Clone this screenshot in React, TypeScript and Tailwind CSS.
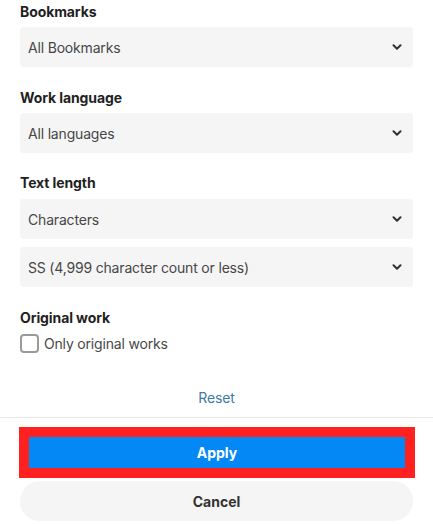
import { useState } from 'react';

const Chevron = () => (
  <svg width="10" height="6" viewBox="0 0 10 6" className="shrink-0" fill="none">
    <path d="M1.5 1.2l3.5 3.5 3.5-3.5" stroke="#333333" strokeWidth="2" strokeLinecap="round" strokeLinejoin="round" />
  </svg>
);

function SelectBox({ value }: { value: string }) {
  return (
    <div className="flex h-10 items-center justify-between rounded-[4px] bg-[#f5f5f5] pl-2 pr-[11px]">
      <span className="text-[14px] tracking-[-0.18px] text-[#474747]">{value}</span>
      <Chevron />
    </div>
  );
}

function Label({ children }: { children: string }) {
  return <div className="h-5 text-[14px] font-bold leading-5 tracking-[-0.1px] text-[#1f1f1f]">{children}</div>;
}

export default function App() {
  const [onlyOriginal, setOnlyOriginal] = useState(false);

  return (
    <div className="h-[524px] w-[433px] overflow-hidden bg-white font-['Inter',sans-serif]">
      <div className="flex flex-col px-5 pt-0.5">
        <Label>Bookmarks</Label>
        <div className="mt-[5px]">
          <SelectBox value="All Bookmarks" />
        </div>

        <div className="mt-[21px]">
          <Label>Work language</Label>
        </div>
        <div className="mt-[5px]">
          <SelectBox value="All languages" />
        </div>

        <div className="mt-5">
          <Label>Text length</Label>
        </div>
        <div className="mt-[6px] flex flex-col gap-2">
          <SelectBox value="Characters" />
          <SelectBox value="SS (4,999 character count or less)" />
        </div>

        <div className="mt-[21px]">
          <Label>Original work</Label>
        </div>
        <label className="mt-[5px] flex h-5 cursor-pointer items-center gap-[5px]">
          <span
            className={
              onlyOriginal
                ? 'h-[19px] w-[19px] rounded-[4px] border-2 border-[#0488f5] bg-[#0488f5]'
                : 'h-[19px] w-[19px] rounded-[4px] border-2 border-[#9a9a9a] bg-white'
            }
            onClick={() => setOnlyOriginal(!onlyOriginal)}
          />
          <span className="text-[14px] tracking-[-0.18px] text-[#474747]">Only original works</span>
        </label>

        <button className="mt-[24px] h-10 text-[14px] tracking-[-0.1px] text-[#3d7ba8]">Reset</button>
      </div>

      <div className="h-px bg-[#e6e6e6]" />

      <div className="flex flex-col px-5 pt-[9px]">
        <div className="-ml-px -mr-[2px] border-[10px] border-[#ff2020]">
          <button className="flex h-[31px] w-full items-center justify-center bg-[#0488f5] text-[14px] font-bold text-white">
            Apply
          </button>
        </div>
        <button className="mt-[3px] flex h-10 w-full items-center justify-center rounded-full bg-[#f5f5f5] text-[14px] font-bold text-[#333333]">
          Cancel
        </button>
      </div>
    </div>
  );
}
